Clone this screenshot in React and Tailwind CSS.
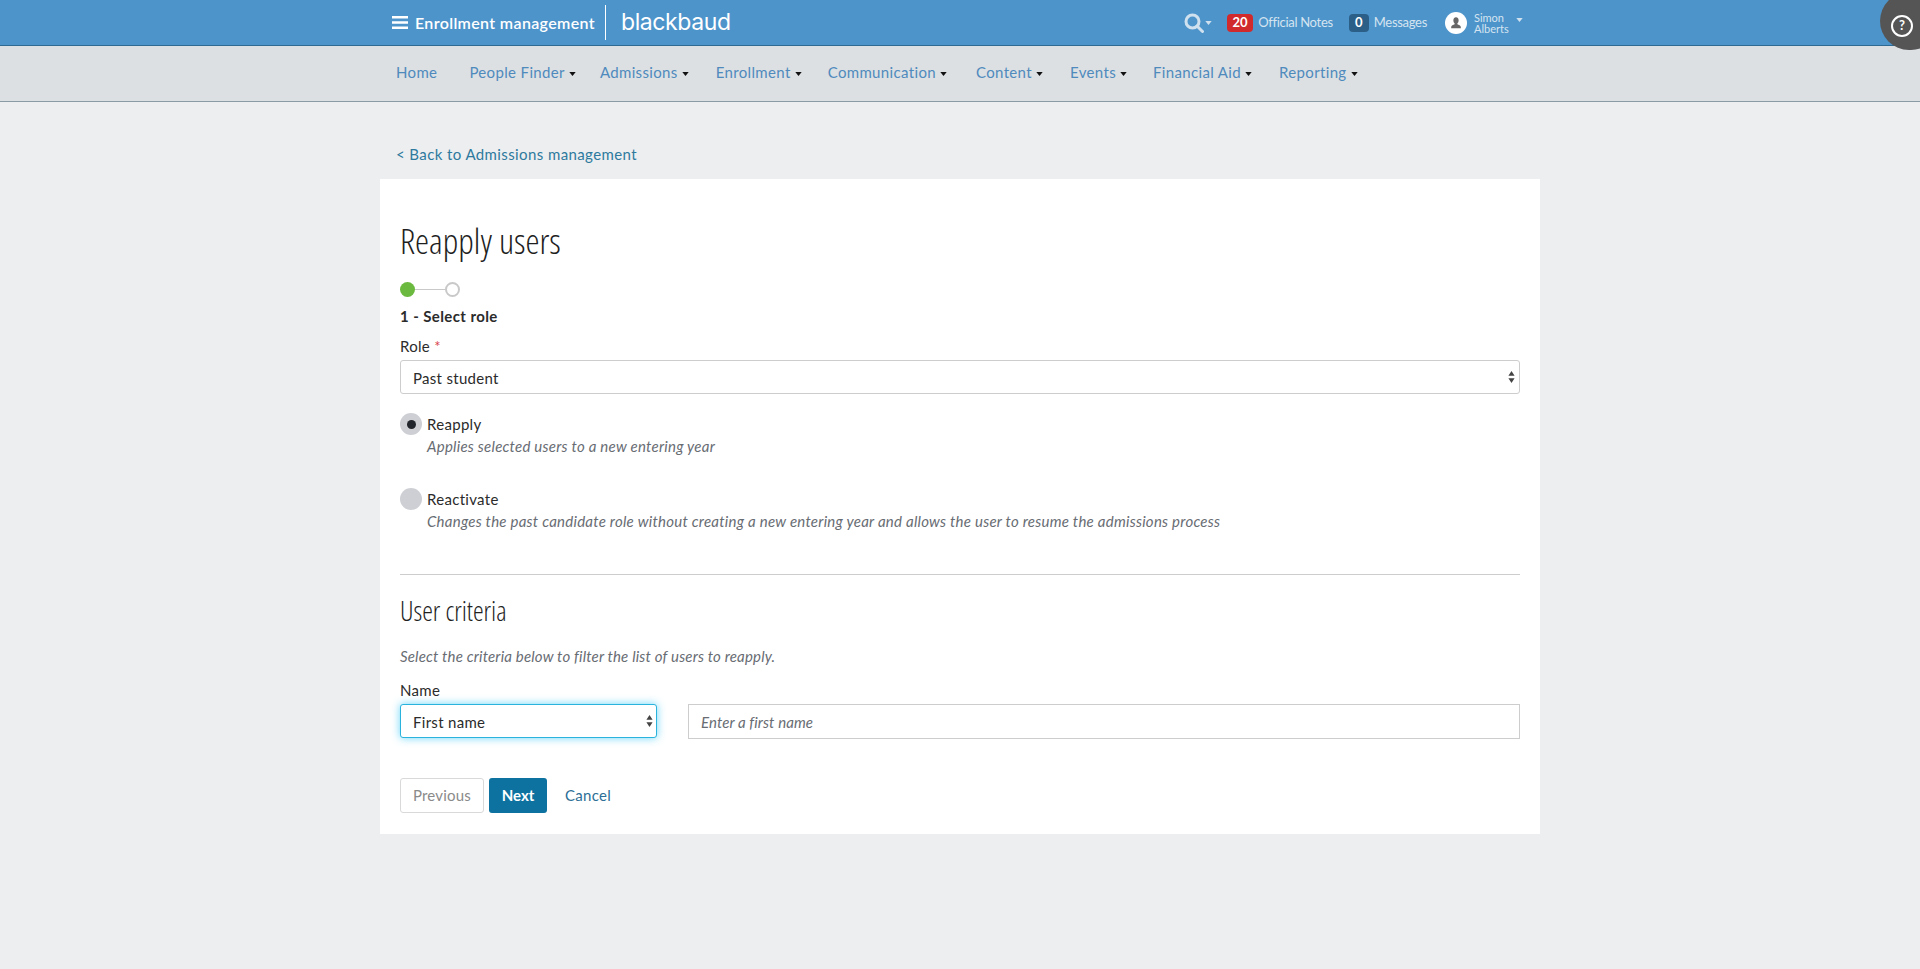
const BODY = "font-['Lato','Open_Sans',sans-serif]"
const HEADING = "font-['Open_Sans',sans-serif] font-light [font-stretch:75%]"
const NAV_ITEMS = [
  ['Home', false, 'mr-[32px]'],
  ['People Finder', true, 'mr-[24px]'],
  ['Admissions', true, 'mr-[27px]'],
  ['Enrollment', true, 'mr-[26px]'],
  ['Communication', true, 'mr-[29px]'],
  ['Content', true, 'mr-[27px]'],
  ['Events', true, 'mr-[26px]'],
  ['Financial Aid', true, 'mr-[27px]'],
  ['Reporting', true, ''],
]

function Caret({ className }) {
  return (
    <svg viewBox="0 0 8 5" className={className}>
      <path d="M0 0h8L4 5z" fill="currentColor" />
    </svg>
  )
}

function SelectArrows({ className }) {
  return (
    <svg viewBox="0 0 8 14" className={`absolute top-[11px] w-[7px] h-[12px] pointer-events-none text-[#444] ${className}`}>
      <path d="M4 0l3.6 5.500H.4zM4 14L.4 8.500h7.200z" fill="currentColor" />
    </svg>
  )
}

function RadioOption({ checked, label, description, className }) {
  return (
    <label className={`flex items-start ${className}`}>
      <span className="w-[22px] h-[22px] rounded-full bg-[#cdcfd4] flex items-center justify-center shrink-0">
        {checked && <span className="w-[9px] h-[9px] rounded-full bg-[#22252b]" />}
      </span>
      <span className="ml-[5px]">
        <span className="block text-[15px] leading-[22px] tracking-[0.3px] text-[#2b2b2b]">{label}</span>
        <span className="block text-[15px] leading-[22px] tracking-[0.25px] italic text-[#686c73]">{description}</span>
      </span>
    </label>
  )
}

function Header() {
  return (
    <div className="h-[46px] bg-[#4d94cb] border-b border-[#2f6a94] flex items-center relative">
      <div className="flex items-center ml-[392px]">
        <svg viewBox="0 0 16 13" className="w-[16px] h-[13px] text-white">
          <path d="M0 0h16v2.600H0zM0 5.200h16v2.600H0zM0 10.400h16V13H0z" fill="currentColor" />
        </svg>
        <span className="ml-[7px] text-white text-[16px] font-semibold tracking-[0.35px] whitespace-nowrap">Enrollment management</span>
        <span className="ml-[10px] w-px h-[35px] bg-white" />
        <span className="ml-[15px] text-white text-[23px] leading-none font-['Inter',sans-serif] font-normal tracking-[-0.4px]">blackbaud</span>
      </div>
      <div className="ml-auto flex items-center mr-[397px]">
        <svg viewBox="0 0 20 20" className="w-[20px] h-[20px] text-[#cfe0ee]" fill="none" stroke="currentColor" strokeWidth="3">
          <circle cx="8.500" cy="8.500" r="6.500" />
          <path d="M13 13l5.500 5.500" strokeLinecap="round" />
        </svg>
        <Caret className="ml-[1px] w-[7px] h-[4px] text-[#cfe0ee]" />
        <span className="ml-[15px] w-[26px] h-[18px] rounded-[4px] bg-[#d02a2c] text-white text-[13px] font-bold flex items-center justify-center">20</span>
        <span className="ml-[5px] text-[#d5e4f0] text-[13px] tracking-[-0.3px]">Official Notes</span>
        <span className="ml-[16px] w-[20px] h-[18px] rounded-[4px] bg-[#2b5f88] text-white text-[13px] font-bold flex items-center justify-center">0</span>
        <span className="ml-[5px] text-[#d5e4f0] text-[13px] tracking-[-0.3px]">Messages</span>
        <span className="ml-[18px] w-[22px] h-[22px] rounded-full bg-white flex items-center justify-center overflow-hidden">
          <svg viewBox="0 0 16 16" className="w-[14px] h-[14px] text-[#666]">
            <path d="M8 1.500c-2 0-3 1.500-3 3.500 0 1.300.6 2.600 1.400 3.300v1C5 10.200 2.500 10.500 2.500 12.500V14h11v-1.500c0-2-2.500-2.300-3.900-3.200v-1C10.400 7.600 11 6.300 11 5c0-2-1-3.500-3-3.500z" fill="currentColor" />
          </svg>
        </span>
        <span className="ml-[7px] text-[#d5e4f0] text-[11px] leading-[11px] w-[36px]">
          Simon
          <br />
          Alberts
        </span>
        <Caret className="ml-[6px] -mt-[6px] w-[7px] h-[4px] text-[#cfe0ee]" />
      </div>
      <div className="absolute right-0 top-0 w-[40px] h-[50px] overflow-hidden">
        <div className="w-[60px] h-[58px] -mt-[8px] rounded-full bg-[#555555] pl-[11px] pt-[23px]">
          <span className="w-[22px] h-[22px] rounded-full border-2 border-white text-white text-[13px] font-bold flex items-center justify-center">?</span>
        </div>
      </div>
    </div>
  )
}

function Nav() {
  return (
    <div className="h-[56px] pb-[2px] bg-[#dce0e3] border-b border-[#8b9ba6] flex items-center pl-[396px]">
      {NAV_ITEMS.map(([label, hasCaret, gap]) => (
        <span key={label} className={`flex items-center text-[15px] tracking-[0.35px] text-[#4f8abd] whitespace-nowrap ${gap}`}>
          {label}
          {hasCaret && <Caret className="ml-[4px] mt-[3px] w-[7px] h-[4px] text-[#111]" />}
        </span>
      ))}
    </div>
  )
}

export default function App() {
  return (
    <div className={`min-h-[969px] bg-[#edeef0] ${BODY}`}>
      <Header />
      <Nav />
      <div className="w-[1160px] ml-[380px]">
        <a className="block h-[77px] pt-[42px] pl-[16px] text-[15px] leading-[20px] tracking-[0.4px] text-[#2d7a9e]">
          &lt; Back to Admissions management
        </a>
        <div className="bg-white h-[655px] px-[20px] pt-[39px]">
          <h1 className={`text-[35.5px] leading-[44px] text-[#1f1f1f] ${HEADING}`}>Reapply users</h1>

          <div className="flex items-center mt-[20px]">
            <span className="w-[15px] h-[15px] rounded-full bg-[#6cb93f]" />
            <span className="w-[30px] h-px bg-[#c9c9c9]" />
            <span className="w-[15px] h-[15px] rounded-full border-2 border-[#c9c9c9]" />
          </div>
          <p className="mt-[8px] text-[15px] leading-[22px] font-bold tracking-[0.4px] text-[#2b2b2b]">1 - Select role</p>
          <p className="mt-[8px] text-[15px] leading-[22px] tracking-[0.3px] text-[#2b2b2b]">
            Role <span className="text-[#d9434e]">*</span>
          </p>

          <div className="relative mt-[3px]">
            <select className="appearance-none w-full h-[34px] pl-[12px] pt-[2px] text-[15px] tracking-[0.3px] text-[#2b2b2b] bg-white border border-[#cdcdcd] rounded-[3px]">
              <option>Past student</option>
            </select>
            <SelectArrows className="right-[5px]" />
          </div>

          <RadioOption
            checked
            className="mt-[19px]"
            label="Reapply"
            description="Applies selected users to a new entering year"
          />
          <RadioOption
            className="mt-[31px]"
            label="Reactivate"
            description="Changes the past candidate role without creating a new entering year and allows the user to resume the admissions process"
          />

          <hr className="mt-[42px] border-t border-[#cdcdcd]" />

          <h2 className={`mt-[18px] text-[27px] leading-[36px] text-[#1f1f1f] ${HEADING}`}>User criteria</h2>
          <p className="mt-[16px] text-[15px] leading-[22px] tracking-[0.18px] italic text-[#686c73]">
            Select the criteria below to filter the list of users to reapply.
          </p>
          <p className="mt-[12px] text-[15px] leading-[22px] tracking-[0.3px] text-[#2b2b2b]">Name</p>

          <div className="flex mt-[3px]">
            <div className="relative w-[257px]">
              <select className="appearance-none w-full h-[34px] pl-[12px] pt-[2px] text-[15px] tracking-[0.3px] text-[#2b2b2b] bg-white border border-[#2ab3dc] rounded-[3px] shadow-[0_0_8px_rgba(90,210,250,0.9)]">
                <option>First name</option>
              </select>
              <SelectArrows className="right-[4px]" />
            </div>
            <input
              placeholder="Enter a first name"
              className="ml-[31px] flex-1 h-[35px] px-[12px] text-[15px] tracking-[0.1px] border border-[#cdcdcd] placeholder:italic placeholder:text-[#686c73]"
            />
          </div>

          <div className="flex items-center mt-[39px]">
            <button className="w-[84px] h-[35px] rounded-[3px] border border-[#d9d9d9] bg-white text-[15px] tracking-[0.2px] text-[#8a8a8a]">Previous</button>
            <button className="ml-[5px] w-[58px] h-[35px] rounded-[3px] bg-[#0e72a0] text-[15px] font-bold text-white">Next</button>
            <a className="ml-[18px] text-[15px] tracking-[0.3px] text-[#2d6f96]">Cancel</a>
          </div>
        </div>
      </div>
    </div>
  )
}
